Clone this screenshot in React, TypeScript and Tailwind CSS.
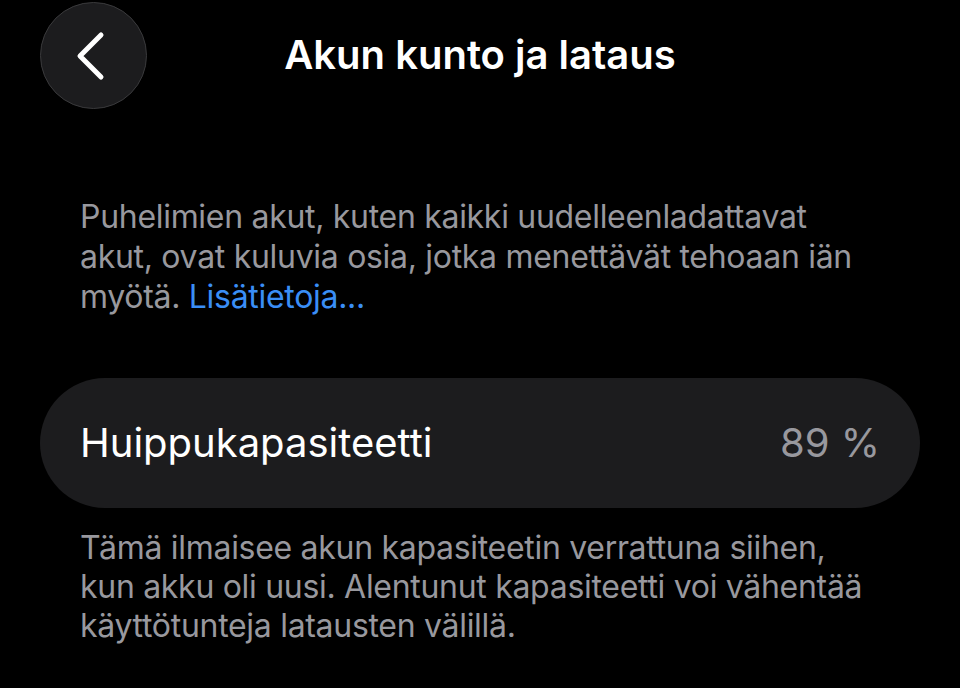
import React from "react";

export default function App() {
  return (
    <div
      className="w-[960px] h-[688px] bg-black text-white overflow-hidden"
      style={{ fontFamily: "Inter, 'Noto Sans', sans-serif" }}
    >
      {/* header */}
      <div className="relative h-[110px] flex items-center justify-center">
        <button className="absolute left-[40px] top-[2px] w-[107px] h-[107px] rounded-full bg-[#1c1c1e] border border-[#3a3a3c] flex items-center justify-center">
          <svg width="34" height="50" viewBox="0 0 34 50" fill="none" className="-ml-[8px]">
            <path d="M28 4 L7 25 L28 46" stroke="white" strokeWidth="5" strokeLinecap="round" strokeLinejoin="round" />
          </svg>
        </button>
        <h1 className="text-[40px] font-semibold leading-none">Akun kunto ja lataus</h1>
      </div>

      <div className="pt-[87px] px-[80px] text-[32px] leading-[40px] text-[#98989e] whitespace-nowrap tracking-[-0.3px]">
        Puhelimien akut, kuten kaikki uudelleenladattavat
        <br />
        akut, ovat kuluvia osia, jotka menettävät tehoaan iän
        <br />
        myötä. <span className="text-[#3a8ef6]">Lisätietoja...</span>
      </div>

      <div className="mt-[61px] mx-[40px] h-[130px] rounded-full bg-[#1c1c1e] flex items-center justify-between px-[40px]">
        <span className="text-[40px]">Huippukapasiteetti</span>
        <span className="text-[40px] text-[#98989e]">89 %</span>
      </div>

      <div className="pt-[20px] px-[80px] text-[32px] leading-[39px] text-[#98989e] whitespace-nowrap tracking-[-0.3px]">
        Tämä ilmaisee akun kapasiteetin verrattuna siihen,
        <br />
        kun akku oli uusi. Alentunut kapasiteetti voi vähentää
        <br />
        käyttötunteja latausten välillä.
      </div>
    </div>
  );
}
